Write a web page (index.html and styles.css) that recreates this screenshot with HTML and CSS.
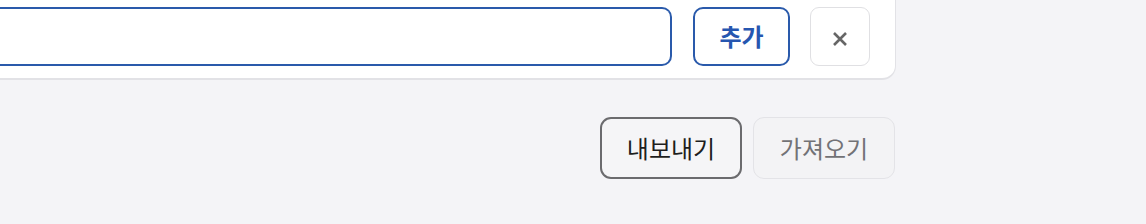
FILE: index.html
```html
<!DOCTYPE html>
<html lang="ko">
<head>
<meta charset="utf-8">
<link rel="stylesheet" href="styles.css">
</head>
<body>
<div class="wrap">
  <div class="card">
    <div class="row">
      <input class="field" type="text" aria-label="입력">
      <button class="btn-add">추가</button>
      <button class="btn-close" aria-label="닫기">
        <svg width="16" height="16" viewBox="0 0 16 16"><path d="M2 2 L14 14 M14 2 L2 14" stroke="#666" stroke-width="2.6" stroke-linecap="butt"/></svg>
      </button>
    </div>
  </div>
  <div class="actions">
    <button class="btn-export">내보내기</button>
    <button class="btn-import">가져오기</button>
  </div>
</div>
</body>
</html>
```
FILE: styles.css
```css
html, body {
  margin: 0;
  padding: 0;
  background: #f4f4f7;
  font-family: "Noto Sans CJK KR", "Noto Sans", sans-serif;
}
.wrap {
  width: 896px;
}
.card {
  background: #ffffff;
  border-right: 1px solid #e2e2e6;
  border-bottom: 2px solid #e2e2e6;
  border-bottom-right-radius: 14px;
  padding: 7px 25px 12px 0;
}
.row {
  display: flex;
  align-items: stretch;
  gap: 20px;
  height: 59px;
}
.field {
  flex: 1;
  margin: 0;
  box-sizing: border-box;
  border: 2px solid #2a5aab;
  border-left: none;
  border-radius: 0 10px 10px 0;
  outline: none;
  background: #fff;
  font: inherit;
}
.btn-add {
  width: 97px;
  margin-left: 1px;
  box-sizing: border-box;
  border: 2px solid #2a5aab;
  border-radius: 10px;
  background: #fff;
  color: #2656b0;
  font-family: inherit;
  font-size: 24px;
  font-weight: 700;
  padding: 0 0 2px 0;
}
.btn-close {
  width: 60px;
  box-sizing: border-box;
  border: 1.5px solid #e0e0e3;
  border-radius: 9px;
  background: #fff;
  display: flex;
  align-items: center;
  justify-content: center;
  padding: 4px 0 0 0;
}
.actions {
  display: flex;
  justify-content: flex-end;
  gap: 11px;
  margin-top: 37px;
  padding-right: 1px;
}
.actions button {
  width: 142px;
  height: 62px;
  box-sizing: border-box;
  border-radius: 11px;
  font-family: inherit;
  font-size: 24px;
  font-weight: 400;
  padding: 0 0 2px 0;
}
.btn-export {
  border: 2px solid #6b6b6e;
  background: #f5f5f7;
  color: #1e1e20;
}
.btn-import {
  border: 1.5px solid #e3e3e7;
  background: #f3f3f5;
  color: #727276;
}
```
